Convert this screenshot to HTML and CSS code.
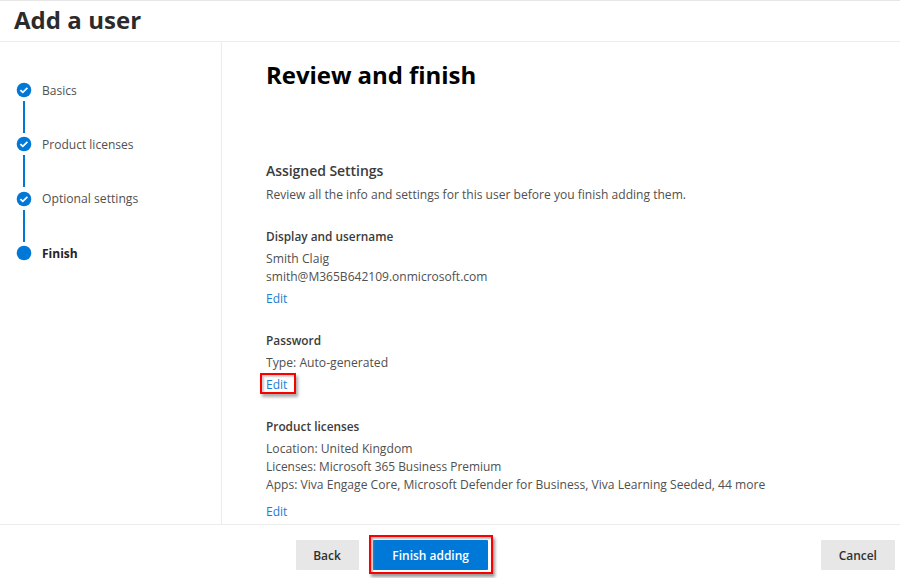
FILE: index.html
```html
<!DOCTYPE html>
<html lang="en">
<head>
<meta charset="utf-8">
<title>Add a user</title>
<link rel="stylesheet" href="styles.css">
</head>
<body>
<div class="app">
  <header class="header"><h1>Add a user</h1></header>
  <div class="body">
    <nav class="steps">
      <div class="step"><svg class="dot" viewBox="0 0 16 16"><circle cx="8" cy="8" r="7.3"/><path d="M4.4 8.1l2.4 2.3 4.6-4.6"/></svg><span class="narrow">Basics</span></div>
      <div class="step"><svg class="dot" viewBox="0 0 16 16"><circle cx="8" cy="8" r="7.3"/><path d="M4.4 8.1l2.4 2.3 4.6-4.6"/></svg><span class="narrow">Product licenses</span></div>
      <div class="step"><svg class="dot" viewBox="0 0 16 16"><circle cx="8" cy="8" r="7.3"/><path d="M4.4 8.1l2.4 2.3 4.6-4.6"/></svg><span class="narrow wide">Optional settings</span></div>
      <div class="step current"><svg class="dot" viewBox="0 0 16 16"><circle cx="8" cy="8" r="7.3"/></svg><span class="narrow">Finish</span></div>
    </nav>
    <main class="main">
      <h2>Review and finish</h2>
      <h3 class="assigned">Assigned Settings</h3>
      <p class="intro narrow">Review all the info and settings for this user before you finish adding them.</p>
      <section class="names">
        <h4 class="narrow">Display and username</h4>
        <p class="narrow wide">Smith Claig</p>
        <p class="narrow">smith@M365B642109.onmicrosoft.com</p>
        <a class="edit"><span class="narrow">Edit</span></a>
      </section>
      <section class="password">
        <h4 class="narrow">Password</h4>
        <p class="narrow wide">Type: Auto-generated</p>
        <a class="edit marked"><span class="narrow">Edit</span></a>
      </section>
      <section class="licenses">
        <h4 class="narrow">Product licenses</h4>
        <p class="narrow wide">Location: United Kingdom</p>
        <p class="narrow tight">Licenses: Microsoft 365 Business Premium</p>
        <p class="narrow apps">Apps: Viva Engage Core, Microsoft Defender for Business, Viva Learning Seeded, 44 more</p>
        <a class="edit"><span class="narrow">Edit</span></a>
      </section>
    </main>
  </div>
  <footer class="footer">
    <button class="btn back"><span>Back</span></button>
    <div class="frame"><button class="btn primary"><span>Finish adding</span></button></div>
    <button class="btn cancel"><span>Cancel</span></button>
  </footer>
</div>
</body>
</html>
```
FILE: styles.css
```css
*, *::before, *::after { box-sizing: border-box; margin: 0; padding: 0; }
body { width: 900px; height: 578px; overflow: hidden; background: #fff; color: #505050; font: 13px/18.2px "Open Sans", "Noto Sans", sans-serif; }
.app { height: 578px; display: flex; flex-direction: column; border-top: 1px solid #e6e6e6; }
.header { height: 41px; border-bottom: 1px solid #ececec; padding-left: 14px; }
h1 { font-size: 24px; line-height: 38px; font-weight: 700; letter-spacing: .05px; color: #2b2b2b; }
.narrow { display: block; width: max-content; transform: scaleX(.926); transform-origin: 0 50%; }
.wide { transform: scaleX(.935); }
.tight { transform: scaleX(.915); }
.intro.narrow { transform: scaleX(.928); }
.apps { transform: scaleX(.93); }
.body { height: 482px; display: flex; }
.steps { width: 222px; border-right: 1px solid #ececec; padding: 38.8px 0 0 16px; }
.step { position: relative; display: flex; align-items: center; gap: 10px; height: 18px; margin-bottom: 36.4px; }
.step:not(:last-child)::after { content: ""; position: absolute; left: 7px; top: 20px; width: 2px; height: 32px; background: #0078d4; }
.dot { width: 16px; height: 16px; }
.dot circle { fill: #0078d7; }
.dot path { fill: none; stroke: #fff; stroke-width: 1.7; }
.current { font-weight: 700; color: #242424; }
.main { flex: 1; padding: 18px 0 0 44px; }
h2 { font-size: 24px; line-height: 30px; font-weight: 700; letter-spacing: -.05px; color: #000; }
.assigned { margin-top: 71px; font-size: 14px; line-height: 20px; font-weight: 600; letter-spacing: -.05px; color: #3b3b3b; }
.intro { margin-top: 4px; }
h4 { font-size: 13px; line-height: 18px; font-weight: 600; margin-bottom: 4px; color: #3b3b3b; }
h4.narrow { transform: scaleX(.911); }
.names { margin-top: 24px; }
.password, .licenses { margin-top: 24px; }
.edit { display: block; position: relative; width: max-content; line-height: 18px; margin-top: 3.6px; color: #1a80d4; }
.licenses .edit { margin-top: 8px; }
.marked::after { content: ""; position: absolute; left: -6px; top: -2px; width: 36px; height: 21px; border: 2px solid #fa0000; box-shadow: 2px 3px 3px #aaa, inset 2px 2px 2px #ccc; }
.footer { height: 53px; border-top: 1px solid #ececec; display: flex; align-items: center; padding: 7px 5px 7px 296px; }
.footer > .btn { margin-top: 7px; }
.btn { border: 0; border-radius: 1px; height: 30px; background: #e7e7e7; color: #303030; font: 600 13px/18px "Open Sans", sans-serif; }
.btn span { display: inline-block; transform: scaleX(.92); }
.back { width: 63px; }
.frame { margin: 6px 0 0 10px; width: 124px; height: 39px; border: 2px solid #fa0000; padding: 3px 2px; box-shadow: 2px 3px 3px #999, inset 2px 2px 2px #bbb; }
.primary { width: 115px; background: #0078d7; color: #fff; display: block; box-shadow: inset 2px 0 2px -1px #5179a0; }
.cancel { width: 74px; margin-left: auto; }
```
